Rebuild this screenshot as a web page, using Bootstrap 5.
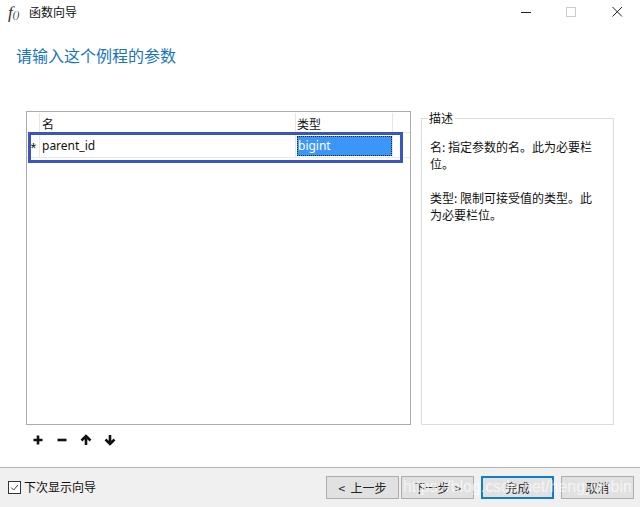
<!DOCTYPE html>
<html lang="zh">
<head>
<meta charset="utf-8">
<link href="https://cdn.jsdelivr.net/npm/bootstrap@5.3.0/dist/css/bootstrap.min.css" rel="stylesheet">
<style>
html,body{width:640px;height:507px;overflow:hidden;margin:0}
body{font-family:"Noto Sans CJK SC","Liberation Sans",sans-serif;font-size:12px;color:#111;background:#fff;position:relative;line-height:1.2}
.latin{font-family:"Noto Sans","Noto Sans CJK SC",sans-serif}
.titlebar{height:25px;padding-left:8px}
.fx{font-family:"Liberation Serif",serif;font-style:italic;font-size:17px;color:#333;width:21px;line-height:1}
.fx small{font-size:10px;font-style:italic}
.wintitle{font-size:12px}
.winbtns{width:140px;margin-left:auto;height:25px}
.heading{color:#1a75bb;font-size:16px;padding-left:16px;margin-top:20px;height:66px;line-height:21px}
.workarea{padding-left:26px;height:314px;width:614px}
.gridbox{width:385px;height:314px;border:1px solid #ababab;padding:1px 0 0 0;flex:none}
.headrow{height:20px;border-bottom:1px solid #e8e8e8}
.cell-a{width:13px;border-right:1px solid #e6e6e6}
.cell-b{width:256px;border-right:1px solid #e6e6e6;padding-left:2px}
.cell-c{width:97px;border-right:1px solid #e6e6e6;padding-left:1px}
.headrow>div{display:flex;align-items:flex-end;padding-bottom:1px}
.datarow{height:25px;border-bottom:1px solid #e8e8e8;font-size:12px}
.datarow>div{display:flex;align-items:center}
.cell-b.latin{padding-top:2px}
.star{justify-content:center;padding-left:1px;padding-top:4px;font-size:15px;line-height:1;font-family:"Liberation Sans",sans-serif}
.pick{background:#3c96f7;color:#fff;outline:1px dotted #222;outline-offset:-1px;height:20px;width:95px;padding-left:1px;padding-top:2px;margin-top:1px}
.descbox{margin-left:10px;margin-top:7px;width:193px;height:307px;border:1px solid #dcdcdc;padding:19px 9px 0 8px;position:relative;line-height:17px;font-size:12px}
.desclabel{position:absolute;left:6px;top:-8px;background:#fff;padding:0 2px 0 1px;font-size:12px;line-height:14px}
.descbox p{margin:0 0 17px}
.tools{height:42px;padding-left:32px;padding-bottom:12px;gap:12px}
.tools svg{display:block}
.footbar{height:40px;background:#f0f0f0;border-top:1px solid #b5b5b5;padding:0 6px 0 8px}
.wizcheck{width:13px;height:13px;border:1px solid #333;background:#fff;margin-right:3px;flex:none}
.wizlabel{font-size:12px}
.wizbtn{width:73px;height:23px;background:#e1e1e1;border:1px solid #adadad;border-radius:0;padding:0;font-size:12px;color:#222;line-height:1}
.wizbtn.primary{border:2px solid #0f7dc8}
.gap-a{margin-left:2px}.gap-b{margin-left:7px}
.highlight{position:absolute;left:28px;top:132px;width:375px;height:31px;border:3px solid #3a55bd;pointer-events:none}
.wm{position:absolute;left:403px;top:477px;font-family:"Liberation Sans",sans-serif;font-size:15.9px;line-height:20px;color:rgba(255,255,255,.68);white-space:nowrap;pointer-events:none}
</style>
</head>
<body>
<div class="titlebar d-flex align-items-center">
  <span class="fx">f<small>()</small></span>
  <span class="wintitle">函数向导</span>
  <svg class="winbtns" viewBox="0 0 140 25" aria-hidden="true">
    <path d="M21 12.5h10" stroke="#222" stroke-width="1"/>
    <rect x="66.5" y="7.5" width="9" height="9" fill="none" stroke="#ccc"/>
    <path d="M112.5 7l9.500 9.500M122 7l-9.500 9.500" stroke="#222" stroke-width="1" fill="none"/>
  </svg>
</div>
<div class="heading">请输入这个例程的参数</div>
<div class="workarea d-flex">
  <div class="gridbox">
    <div class="headrow d-flex">
      <div class="cell-a"></div><div class="cell-b">名</div><div class="cell-c">类型</div>
    </div>
    <div class="datarow d-flex">
      <div class="cell-a star">*</div>
      <div class="cell-b latin">parent_id</div>
      <div class="cell-c latin"><div class="pick d-flex align-items-center">bigint</div></div>
    </div>
  </div>
  <div class="descbox">
    <span class="desclabel">描述</span>
    <p>名: 指定参数的名。此为必要栏位。</p>
    <p>类型: 限制可接受值的类型。此为必要栏位。</p>
  </div>
</div>
<div class="tools d-flex align-items-center">
  <svg width="12" height="12" viewBox="0 0 12 12"><path d="M6 1.500v9M1.500 6h9" stroke="#111" stroke-width="2.600"/></svg>
  <svg width="12" height="12" viewBox="0 0 12 12"><path d="M1.500 6h9" stroke="#111" stroke-width="2.600"/></svg>
  <svg width="12" height="12" viewBox="0 0 12 12"><path d="M6 11V3M1.500 6.500L6 2l4.500 4.500" stroke="#111" stroke-width="2.600" fill="none"/></svg>
  <svg width="12" height="12" viewBox="0 0 12 12"><path d="M6 1v8M1.500 5.500L6 10l4.500-4.500" stroke="#111" stroke-width="2.600" fill="none"/></svg>
</div>
<div class="footbar d-flex align-items-center">
  <svg class="wizcheck" viewBox="0 0 13 13"><path d="M2.500 6.500l3 3 5-6" fill="none" stroke="#333" stroke-width="1.100"/></svg>
  <span class="wizlabel">下次显示向导</span>
  <button type="button" class="btn wizbtn ms-auto">&lt;&nbsp;&nbsp;上一步</button>
  <button type="button" class="btn wizbtn gap-a">下一步&nbsp;&nbsp;&gt;</button>
  <button type="button" class="btn wizbtn primary gap-b">完成</button>
  <button type="button" class="btn wizbtn gap-b">取消</button>
</div>
<div class="highlight"></div>
<div class="wm">https://blog.csdn.net/hengyunbin</div>
<script src="https://cdn.jsdelivr.net/npm/bootstrap@5.3.0/dist/js/bootstrap.bundle.min.js"></script>
</body>
</html>
